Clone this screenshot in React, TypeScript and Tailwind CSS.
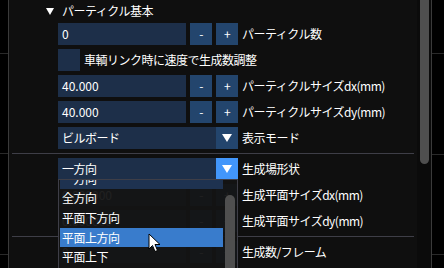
import React from 'react';

const font = { fontFamily: '"Noto Sans CJK JP", "Noto Sans", sans-serif' };

const Arrow = () => (
  <svg width="10" height="8" viewBox="0 0 10 8">
    <polygon points="0,0 10,0 5,8" fill="#fff" />
  </svg>
);

const NumRow = ({ value, label }: { value: string; label: string }) => (
  <div className="flex items-center h-[22px] gap-[4px]">
    <div className="w-[128px] h-full bg-[#1d2f49] flex items-center pl-[4px] tracking-normal">{value}</div>
    <div className="w-[22px] h-full bg-[#23456d] flex items-center justify-center">-</div>
    <div className="w-[22px] h-full bg-[#23456d] flex items-center justify-center">+</div>
    <span className="ml-[0px]">{label}</span>
  </div>
);

const ComboRow = ({ value, label, open }: { value: string; label: string; open?: boolean }) => (
  <div className="flex items-center h-[22px]">
    <div className="w-[158px] h-full bg-[#1d2f49] flex items-center pl-[4px]">{value}</div>
    <div className={`w-[22px] h-full flex items-center justify-center ${open ? 'bg-[#4296fa]' : 'bg-[#23456d]'}`}>
      <Arrow />
    </div>
    <span className="ml-[4px]">{label}</span>
  </div>
);

const Sep = () => <div className="h-px bg-[#3e3e47] -ml-[46px] mr-[3px]" />;

const items = ['一方向', '全方向', '平面下方向', '平面上方向', '平面上下'];

export default function App() {
  return (
    <div className="w-[444px] h-[268px] bg-black flex overflow-hidden text-white text-[12px] tracking-[-0.5px] leading-none" style={font}>
      {/* left viewport strip */}
      <div className="w-[8px] h-full flex flex-col">
        <div className="h-[53px]" />
        <div className="h-px bg-[#2a2a2a]" />
        <div className="h-[99px]" />
        <div className="h-px bg-[#2a2a2a]" />
        <div className="h-[100px]" />
        <div className="h-px bg-[#2a2a2a]" />
      </div>
      <div className="w-px h-full bg-[#3a3a3a]" />

      {/* panel */}
      <div className="w-[408px] h-full bg-[#0f0f0f] relative">
        <div className="flex items-center h-[23px] pl-[37px] pb-[1px]">
          <svg width="8" height="7" viewBox="0 0 8 7" className="mr-[8px]">
            <polygon points="0,0 8,0 4,7" fill="#fff" />
          </svg>
          <span>パーティクル基本</span>
        </div>
        <div className="pl-[49px] flex flex-col gap-[4px]">
          <NumRow value="0" label="パーティクル数" />
          <div className="flex items-center h-[22px] gap-[4px]">
            <div className="w-[22px] h-full bg-[#1d2f49]" />
            <span>車輌リンク時に速度で生成数調整</span>
          </div>
          <NumRow value="40.000" label="パーティクルサイズdx(mm)" />
          <NumRow value="40.000" label="パーティクルサイズdy(mm)" />
          <ComboRow value="ビルボード" label="表示モード" />
          <div className="-my-[1px] py-[1px]"><Sep /></div>
          <ComboRow value="一方向" label="生成場形状" open />
          <NumRow value="0.000000" label="生成平面サイズdx(mm)" />
          <NumRow value="0.000000" label="生成平面サイズdy(mm)" />
          <div className="-my-[1px] py-[1px]"><Sep /></div>
          <NumRow value="0" label="生成数/フレーム" />
        </div>

        {/* combo popup */}
        <div className="absolute left-[49px] top-[179px] w-[180px] h-[100px] bg-[#141414]/95 border border-[#3e3e47] overflow-hidden flex">
          <div className="flex-1 pl-[1px] pt-0">
            <div className="-mt-[11px] flex flex-col">
              {items.map((t, i) => (
                <div
                  key={t}
                  className={`h-[19.6px] flex items-center pl-[2px] ${i === 0 ? 'bg-[#1e3250]' : ''} ${i === 3 ? 'bg-[#397ccc]' : ''}`}
                >
                  {t}
                </div>
              ))}
            </div>
          </div>
          <div className="w-[14px] h-full pt-[15px] pl-[2px] pr-[2px]">
            <div className="w-[10px] h-full bg-[#4f4f4f] rounded-t-[5px]" />
          </div>
        </div>

        {/* mouse cursor */}
        <svg className="absolute left-[139px] top-[233px]" width="13" height="20" viewBox="0 0 13 20">
          <path d="M1 1 L1 16 L4.5 12.5 L7 18.5 L9.5 17.5 L7 11.5 L12 11.5 Z" fill="#fff" stroke="#000" strokeWidth="1" />
        </svg>
      </div>

      {/* scrollbar */}
      <div className="w-[14px] h-full bg-[#0b0b0b] pl-[3px]">
        <div className="w-[9px] h-[164px] bg-[#4f4f4f] rounded-b-[5px]" />
      </div>
      <div className="w-px h-full bg-[#3a3a3a]" />
      <div className="w-[12px] h-full flex flex-col">
        <div className="h-[53px]" />
        <div className="h-px bg-[#2a2a2a]" />
        <div className="h-[100px]" />
        <div className="h-px bg-[#2a2a2a]" />
        <div className="h-[99px]" />
        <div className="h-px bg-[#2a2a2a]" />
      </div>
    </div>
  );
}
